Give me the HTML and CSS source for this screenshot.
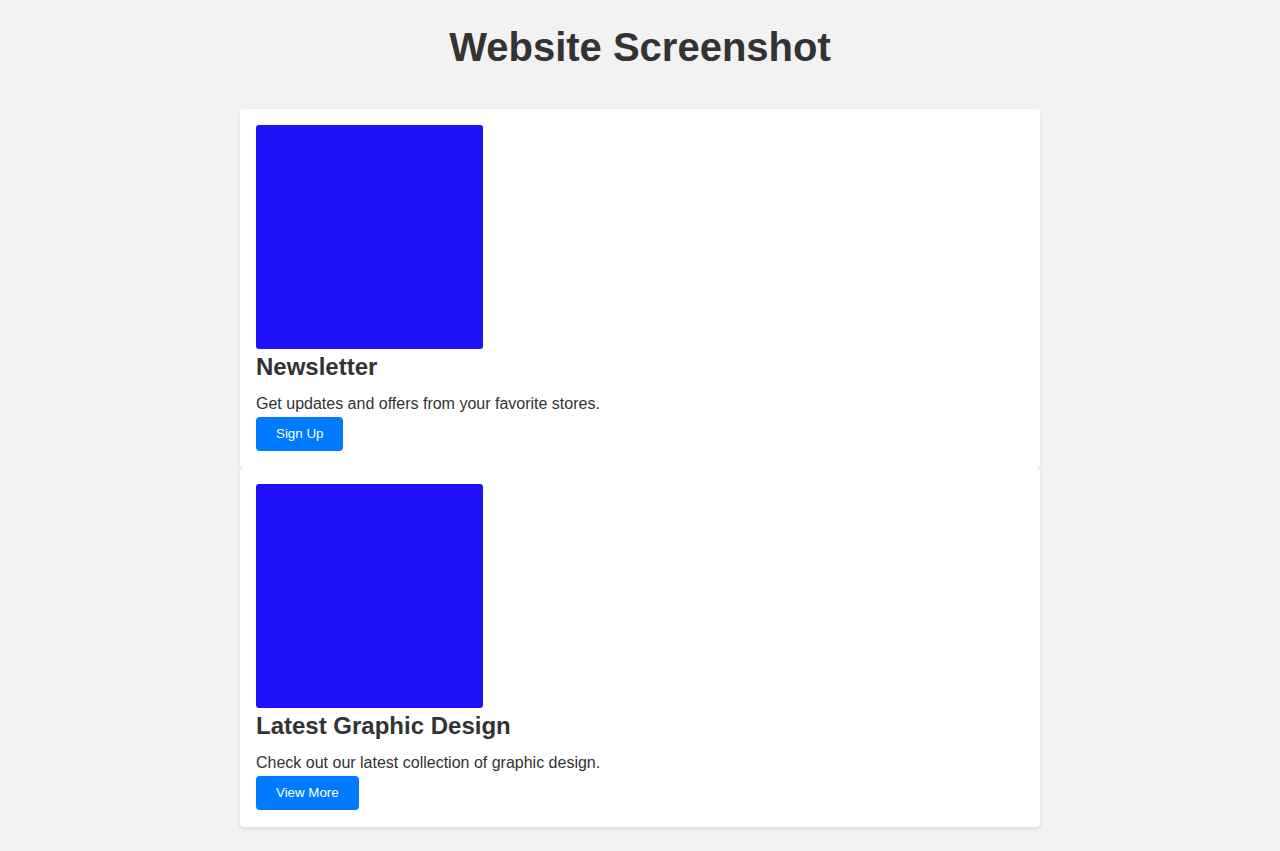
FILE: index.html
```html
<!DOCTYPE html>
<html lang="en">
<head>
<meta charset="utf-8">
<title>Website Screenshot</title>
<link rel="stylesheet" href="styles.css">
</head>
<body>
  <h1 class="page-title">Website Screenshot</h1>
  <main class="cards">
    <section class="card">
      <div class="card-image"></div>
      <h2 class="card-title">Newsletter</h2>
      <p class="card-text">Get updates and offers from your favorite stores.</p>
      <button class="card-btn" type="button">Sign Up</button>
    </section>
    <section class="card">
      <div class="card-image"></div>
      <h2 class="card-title">Latest Graphic Design</h2>
      <p class="card-text">Check out our latest collection of graphic design.</p>
      <button class="card-btn" type="button">View More</button>
    </section>
  </main>
</body>
</html>
```
FILE: styles.css
```css
html, body {
  margin: 0;
  background: #f2f2f2;
}
body {
  padding: 24px 0 20px;
  font-family: "Liberation Sans", Arial, sans-serif;
  color: #333;
}
.page-title {
  margin: 0;
  height: 85px;
  line-height: 46px;
  text-align: center;
  font-size: 40px;
  font-weight: bold;
  color: #333;
}
.cards {
  width: 800px;
  margin: 0 auto;
  display: flex;
  flex-direction: column;
}
.card {
  background: #fff;
  border-radius: 4px;
  box-shadow: 0 2px 4px rgba(0, 0, 0, 0.1);
  padding: 16px 16px 17px;
  display: flex;
  flex-direction: column;
  align-items: flex-start;
}
.card-image {
  width: 227px;
  height: 224px;
  background: #1f10fa;
  border-radius: 3px;
  margin-bottom: 4px;
}
.card-title {
  margin: 0 0 14px;
  font-size: 24px;
  font-weight: bold;
  line-height: 28px;
  color: #333;
}
.card-text {
  margin: 0 0 4px;
  font-size: 16px;
  line-height: 18px;
  color: #333;
}
.card-btn {
  border: none;
  border-radius: 4px;
  background: #007bff;
  color: #fff;
  font-family: "Liberation Sans", Arial, sans-serif;
  font-size: 13.33px;
  line-height: 14px;
  padding: 10px 20px;
  cursor: pointer;
}
```
